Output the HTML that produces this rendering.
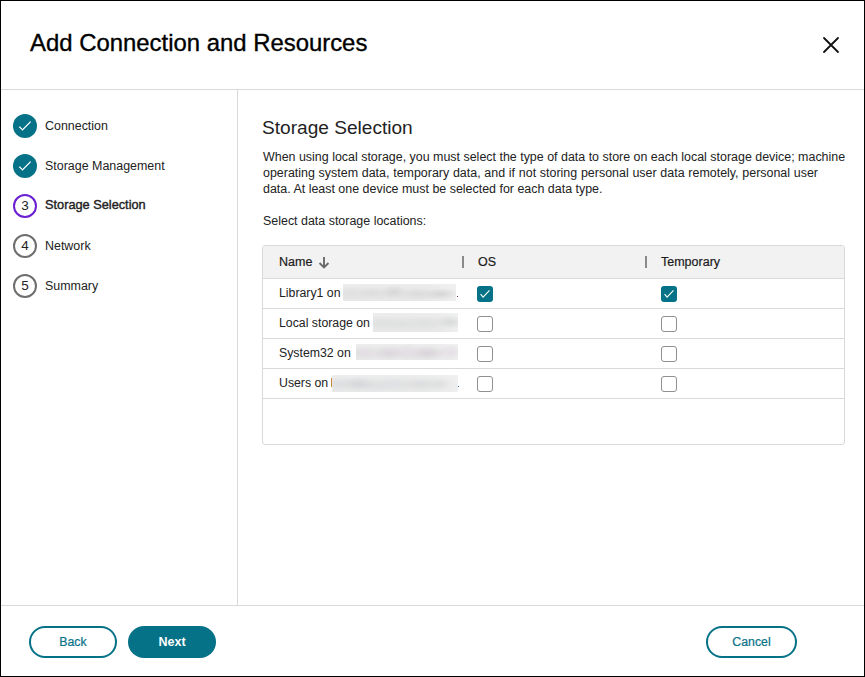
<!DOCTYPE html>
<html><head><meta charset="utf-8">
<style>
*{box-sizing:border-box;margin:0;padding:0}
html,body{width:865px;height:677px;overflow:hidden;background:#fff}
body{font-family:"Liberation Sans",sans-serif;color:#1b1b1b;position:relative}
.a{position:absolute;white-space:nowrap}
#frame{position:absolute;left:0;top:0;width:865px;height:677px;border:1px solid #000}
.hl{position:absolute;height:1px;background:#d9d9d9}
.vl{position:absolute;width:1px;background:#d9d9d9}
.title{left:30px;top:28px;font-size:23.9px;line-height:30px;color:#000;-webkit-text-stroke:0.35px #000}
.step{left:13px;width:24px;height:24px;border-radius:50%;}
.done{background:#067287}
.num{border:2px solid #6e6e6e;font-size:13.5px;line-height:19.5px;text-align:center;color:#222}
.cur{border-color:#6a1fd2}
.sl{left:45px;font-size:12.45px;line-height:16px;color:#222}
.h2{left:262px;top:117px;font-size:19.1px;line-height:22px;color:#222}
.p{left:263px;font-size:12.45px;line-height:16px;color:#222}
.tbl{position:absolute;left:262px;top:245px;width:583px;height:200px;border:1px solid #d9d9d9;border-radius:3px;overflow:hidden}
.thead{position:absolute;left:0;top:0;width:581px;height:33px;background:#f2f2f2;border-bottom:1px solid #d9d9d9}
.row{position:absolute;left:0;width:581px;height:30px;border-bottom:1px solid #d9d9d9}
.th{font-size:12.5px;font-weight:normal;-webkit-text-stroke:0.2px #1b1b1b;line-height:16px;color:#1b1b1b}
.sep{position:absolute;width:2px;height:12px;background:#8a8a8a}
.td{font-size:12.3px;line-height:16px;color:#222}
.cb{position:absolute;width:16px;height:16px;border-radius:3px}
.cb.on{background:#067287}
.cb.off{border:1px solid #8f8f8f;background:#fff}
.blur{position:absolute}
.dot{position:absolute;width:1px;height:1px}
.btn{position:absolute;top:626px;height:32px;border-radius:16px;text-align:center;font-size:12.3px;line-height:28px}
.out{border:2px solid #067287;color:#067287;background:#fff;-webkit-text-stroke:0.2px #067287}
.fill{background:#067287;color:#fff;font-weight:bold;line-height:32px;font-size:12.5px}
</style></head><body>
<div id="frame"></div>
<div class="a title">Add Connection and Resources</div>
<svg class="a" style="left:815px;top:29px" width="32" height="32" viewBox="0 0 32 32"><path d="M9 9 L23 23 M23 9 L9 23" stroke="#111" stroke-width="1.8" stroke-linecap="round" fill="none"/></svg>
<div class="hl" style="left:1px;top:89px;width:863px"></div>
<div class="vl" style="left:237px;top:90px;height:515px"></div>
<div class="hl" style="left:1px;top:605px;width:863px"></div>

<!-- sidebar -->
<div class="a step done" style="top:114px"><svg width="24" height="24" viewBox="0 0 24 24"><path d="M6.3 12.6 L9.5 15.9 L17.6 7.6" stroke="#fff" stroke-width="1.3" fill="none"/></svg></div>
<div class="a sl" style="top:118px">Connection</div>
<div class="a step done" style="top:154px"><svg width="24" height="24" viewBox="0 0 24 24"><path d="M6.3 12.6 L9.5 15.9 L17.6 7.6" stroke="#fff" stroke-width="1.3" fill="none"/></svg></div>
<div class="a sl" style="top:158px">Storage Management</div>
<div class="a step num cur" style="top:194px">3</div>
<div class="a sl" style="top:197px;font-size:12.75px;-webkit-text-stroke:0.4px #222">Storage Selection</div>
<div class="a step num" style="top:234px">4</div>
<div class="a sl" style="top:238px">Network</div>
<div class="a step num" style="top:274px">5</div>
<div class="a sl" style="top:278px">Summary</div>

<!-- content -->
<div class="a h2">Storage Selection</div>
<div class="a p" style="top:148.5px">When using local storage, you must select the type of data to store on each local storage device; machine</div>
<div class="a p" style="top:164.5px;word-spacing:0.3px">operating system data, temporary data, and if not storing personal user data remotely, personal user</div>
<div class="a p" style="top:180.5px">data. At least one device must be selected for each data type.</div>
<div class="a p" style="top:212.5px">Select data storage locations:</div>

<div class="tbl">
  <div class="thead"></div>
  <div class="row" style="top:33px"></div>
  <div class="row" style="top:63px"></div>
  <div class="row" style="top:93px"></div>
  <div class="row" style="top:123px"></div>
</div>
<div class="a th" style="left:279px;top:253.5px">Name</div>
<svg class="a" style="left:318px;top:256px" width="12" height="13" viewBox="0 0 12 13"><path d="M6 1 V11.5 M1.5 7 L6 11.5 L10.5 7" stroke="#6a6a6a" stroke-width="1.9" fill="none"/></svg>
<div class="sep" style="left:462px;top:256px"></div>
<div class="a th" style="left:478px;top:253.5px">OS</div>
<div class="sep" style="left:645px;top:256px"></div>
<div class="a th" style="left:661px;top:253.5px">Temporary</div>

<div class="a td" style="left:279px;top:285px">Library1 on</div>
<div class="blur" style="left:343px;top:284px;width:113px;height:17px;background:radial-gradient(ellipse 16px 7px at 8px 9px,rgba(224,224,224,0.9),rgba(228,228,228,0)),radial-gradient(ellipse 17px 6px at 29px 9px,rgba(220,220,220,0.9),rgba(228,228,228,0)),radial-gradient(ellipse 13px 7px at 51px 8px,rgba(214,214,214,0.9),rgba(228,228,228,0)),radial-gradient(ellipse 18px 6px at 75px 10px,rgba(218,218,218,0.9),rgba(228,228,228,0)),radial-gradient(ellipse 17px 6px at 98px 10px,rgba(212,212,212,0.9),rgba(228,228,228,0)),linear-gradient(90deg,rgba(255,255,255,0) 75%,rgba(245,245,245,.55)),linear-gradient(#ededed,#e4e4e4 55%,#e8e8e8)"></div>
<div class="dot" style="left:457px;top:296px;background:#8a2a3a"></div>
<div class="a td" style="left:279px;top:315px">Local storage on</div>
<div class="blur" style="left:373px;top:313px;width:85px;height:19px;background:radial-gradient(ellipse 16px 7px at 8px 10px,rgba(222,224,224,0.9),rgba(228,228,228,0)),radial-gradient(ellipse 20px 7px at 28px 11px,rgba(222,224,224,0.9),rgba(228,228,228,0)),radial-gradient(ellipse 17px 7px at 51px 10px,rgba(222,224,224,0.9),rgba(228,228,228,0)),radial-gradient(ellipse 15px 7px at 77px 9px,rgba(215,217,217,0.9),rgba(228,228,228,0)),linear-gradient(90deg,rgba(255,255,255,0) 75%,rgba(245,245,245,.55)),linear-gradient(#ededed,#e4e4e4 55%,#e8e8e8)"></div>
<div class="a td" style="left:279px;top:345px">System32 on</div>
<div class="blur" style="left:356px;top:344px;width:102px;height:16px;background:radial-gradient(ellipse 14px 7px at 8px 9px,rgba(226,220,226,0.9),rgba(228,228,228,0)),radial-gradient(ellipse 17px 7px at 33px 9px,rgba(219,213,219,0.9),rgba(228,228,228,0)),radial-gradient(ellipse 13px 8px at 51px 8px,rgba(227,221,227,0.9),rgba(228,228,228,0)),radial-gradient(ellipse 19px 7px at 71px 9px,rgba(216,210,216,0.9),rgba(228,228,228,0)),radial-gradient(ellipse 13px 8px at 95px 8px,rgba(228,222,228,0.9),rgba(228,228,228,0)),linear-gradient(90deg,rgba(255,255,255,0) 75%,rgba(245,245,245,.55)),linear-gradient(#ededed,#e4e4e4 55%,#e8e8e8)"></div>
<div class="a td" style="left:279px;top:375px">Users on</div>
<div class="dot" style="left:331px;top:378px;width:1px;height:9px;background:#c58a3a"></div>
<div class="blur" style="left:332px;top:375px;width:126px;height:17px;background:radial-gradient(ellipse 13px 7px at 8px 9px,rgba(220,222,224,0.9),rgba(228,228,228,0)),radial-gradient(ellipse 18px 7px at 26px 9px,rgba(211,213,215,0.9),rgba(228,228,228,0)),radial-gradient(ellipse 17px 7px at 45px 10px,rgba(222,224,226,0.9),rgba(228,228,228,0)),radial-gradient(ellipse 19px 7px at 64px 9px,rgba(222,224,226,0.9),rgba(228,228,228,0)),radial-gradient(ellipse 17px 6px at 88px 9px,rgba(218,220,222,0.9),rgba(228,228,228,0)),radial-gradient(ellipse 12px 6px at 107px 9px,rgba(219,221,223,0.9),rgba(228,228,228,0)),linear-gradient(90deg,rgba(255,255,255,0) 75%,rgba(245,245,245,.55)),linear-gradient(#ededed,#e4e4e4 55%,#e8e8e8)"></div>
<div class="dot" style="left:458px;top:386px;background:#3a7ac8"></div>

<div class="cb on" style="left:477px;top:286px"><svg width="16" height="16" viewBox="0 0 16 16"><path d="M3.6 8.2 L6.1 11.2 L12.5 4.3" stroke="#fff" stroke-width="1.1" fill="none"/></svg></div>
<div class="cb on" style="left:661px;top:286px"><svg width="16" height="16" viewBox="0 0 16 16"><path d="M3.6 8.2 L6.1 11.2 L12.5 4.3" stroke="#fff" stroke-width="1.1" fill="none"/></svg></div>
<div class="cb off" style="left:477px;top:316px"></div>
<div class="cb off" style="left:661px;top:316px"></div>
<div class="cb off" style="left:477px;top:346px"></div>
<div class="cb off" style="left:661px;top:346px"></div>
<div class="cb off" style="left:477px;top:376px"></div>
<div class="cb off" style="left:661px;top:376px"></div>

<!-- footer -->
<div class="btn out" style="left:29px;width:88px">Back</div>
<div class="btn fill" style="left:128px;width:88px">Next</div>
<div class="btn out" style="left:706px;width:91px">Cancel</div>
</body></html>
